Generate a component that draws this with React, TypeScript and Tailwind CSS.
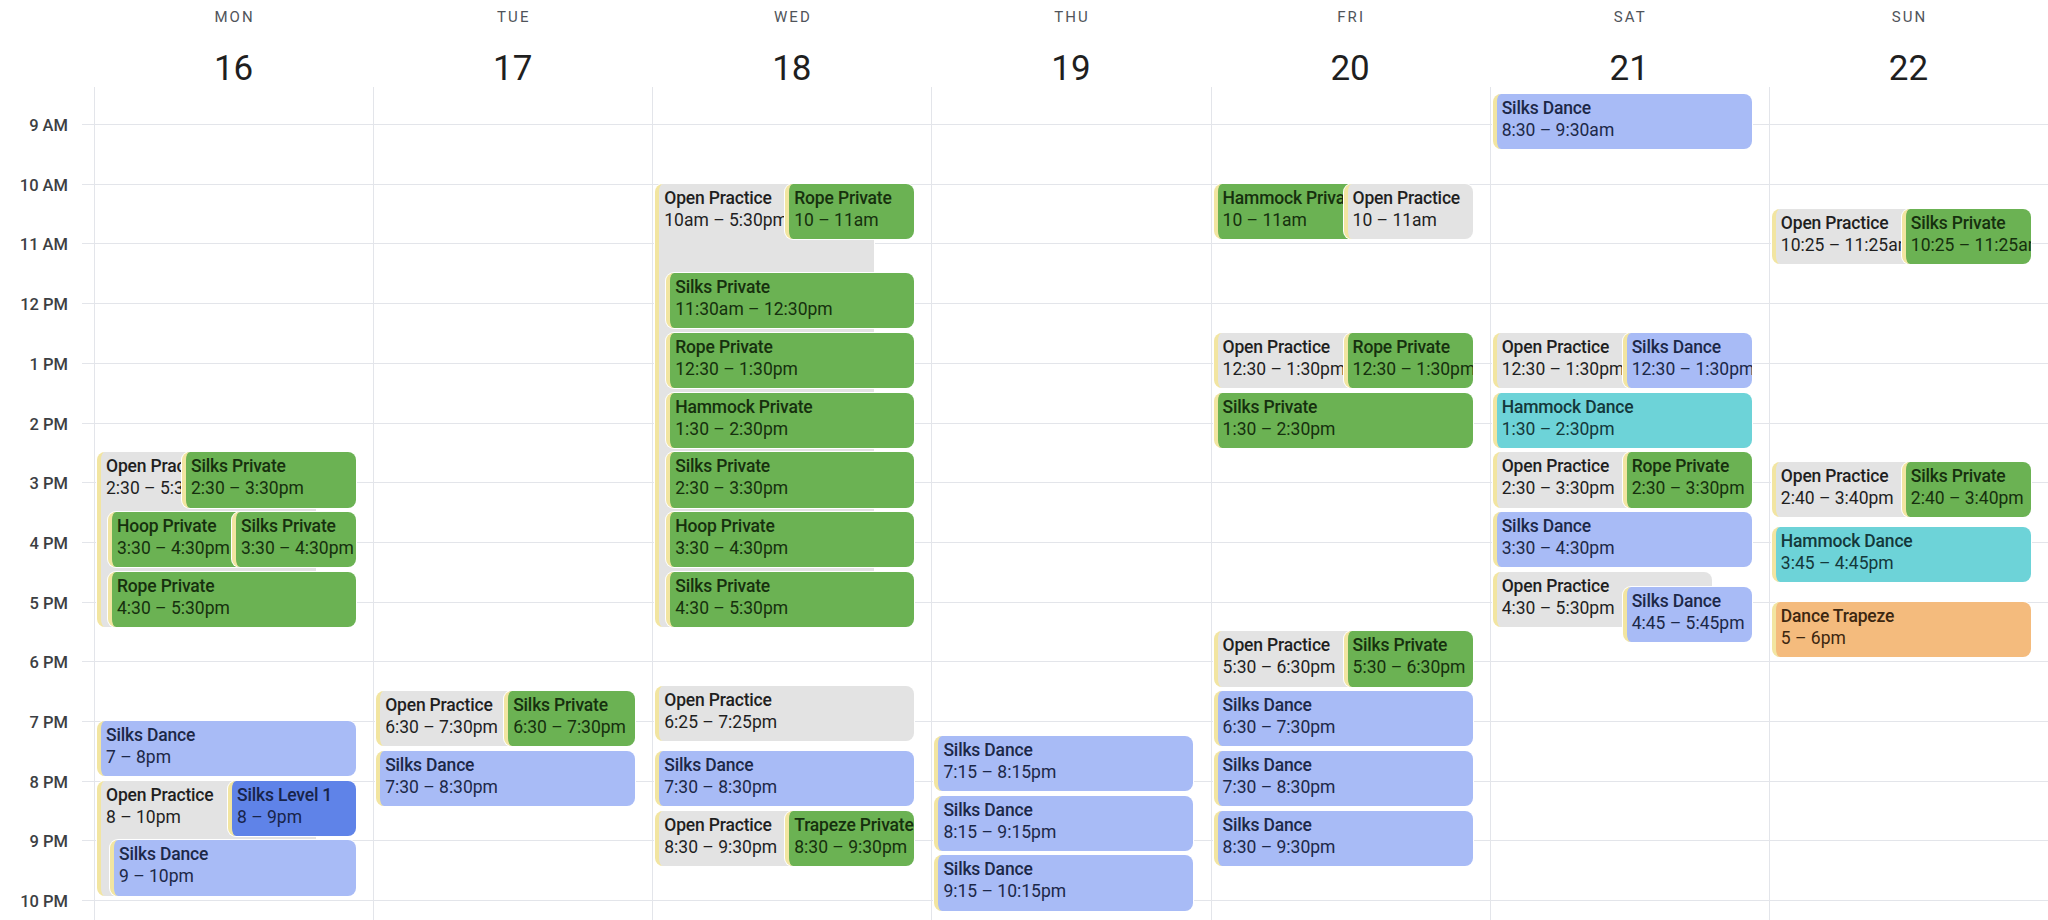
import React from 'react';

const HOUR = 59.7;
const OFFSET = 37; // 9 AM line, measured from top of the scroll body

type Tone = 'gray' | 'green' | 'blue' | 'navy' | 'cyan' | 'orange';

interface CalEvent {
  title: string;
  time: string;
  start: number;
  end: number;
  tone: Tone;
  l: number;
  r: number;
}

const toneClass: Record<Tone, string> = {
  gray: 'bg-[#e3e3e3] text-[#1f1f1f]',
  green: 'bg-[#6bb253] text-[#16300e]',
  blue: 'bg-[#a8bbf6] text-[#1c2848]',
  navy: 'bg-[#5f83e8] text-[#18244a]',
  cyan: 'bg-[#6dd3d8] text-[#14383b]',
  orange: 'bg-[#f4bb7d] text-[#3d2710]',
};

// horizontal slots inside a day column (px from the column's left edge)
const F = { l: 1, r: 262 };
const P1 = { l: 1, r: 222 };
const P2 = { l: 131, r: 262 };
const N = { l: 12, r: 262 };

const ev = (title: string, time: string, start: number, end: number, tone: Tone, slot: { l: number; r: number }): CalEvent => ({
  title,
  time,
  start,
  end,
  tone,
  ...slot,
});

const days: { name: string; date: number; events: CalEvent[] }[] = [
  {
    name: 'MON',
    date: 16,
    events: [
      ev('Open Practice', '2:30 – 5:30pm', 14.5, 17.5, 'gray', P1),
      ev('Silks Private', '2:30 – 3:30pm', 14.5, 15.5, 'green', { l: 86, r: 262 }),
      ev('Hoop Private', '3:30 – 4:30pm', 15.5, 16.5, 'green', { l: 12, r: 150 }),
      ev('Silks Private', '3:30 – 4:30pm', 15.5, 16.5, 'green', { l: 136, r: 262 }),
      ev('Rope Private', '4:30 – 5:30pm', 16.5, 17.5, 'green', N),
      ev('Silks Dance', '7 – 8pm', 19, 20, 'blue', F),
      ev('Open Practice', '8 – 10pm', 20, 22, 'gray', P1),
      ev('Silks Level 1', '8 – 9pm', 20, 21, 'navy', { l: 132, r: 262 }),
      ev('Silks Dance', '9 – 10pm', 21, 22, 'blue', { l: 14, r: 262 }),
    ],
  },
  {
    name: 'TUE',
    date: 17,
    events: [
      ev('Open Practice', '6:30 – 7:30pm', 18.5, 19.5, 'gray', P1),
      ev('Silks Private', '6:30 – 7:30pm', 18.5, 19.5, 'green', { l: 129, r: 262 }),
      ev('Silks Dance', '7:30 – 8:30pm', 19.5, 20.5, 'blue', F),
    ],
  },
  {
    name: 'WED',
    date: 18,
    events: [
      ev('Open Practice', '10am – 5:30pm', 10, 17.5, 'gray', P1),
      ev('Rope Private', '10 – 11am', 10, 11, 'green', P2),
      ev('Silks Private', '11:30am – 12:30pm', 11.5, 12.5, 'green', N),
      ev('Rope Private', '12:30 – 1:30pm', 12.5, 13.5, 'green', N),
      ev('Hammock Private', '1:30 – 2:30pm', 13.5, 14.5, 'green', N),
      ev('Silks Private', '2:30 – 3:30pm', 14.5, 15.5, 'green', N),
      ev('Hoop Private', '3:30 – 4:30pm', 15.5, 16.5, 'green', N),
      ev('Silks Private', '4:30 – 5:30pm', 16.5, 17.5, 'green', N),
      ev('Open Practice', '6:25 – 7:25pm', 18 + 25 / 60, 19 + 25 / 60, 'gray', F),
      ev('Silks Dance', '7:30 – 8:30pm', 19.5, 20.5, 'blue', F),
      ev('Open Practice', '8:30 – 9:30pm', 20.5, 21.5, 'gray', P1),
      ev('Trapeze Private', '8:30 – 9:30pm', 20.5, 21.5, 'green', P2),
    ],
  },
  {
    name: 'THU',
    date: 19,
    events: [
      ev('Silks Dance', '7:15 – 8:15pm', 19.25, 20.25, 'blue', F),
      ev('Silks Dance', '8:15 – 9:15pm', 20.25, 21.25, 'blue', F),
      ev('Silks Dance', '9:15 – 10:15pm', 21.25, 22.25, 'blue', F),
    ],
  },
  {
    name: 'FRI',
    date: 20,
    events: [
      ev('Hammock Private', '10 – 11am', 10, 11, 'green', P1),
      ev('Open Practice', '10 – 11am', 10, 11, 'gray', P2),
      ev('Open Practice', '12:30 – 1:30pm', 12.5, 13.5, 'gray', P1),
      ev('Rope Private', '12:30 – 1:30pm', 12.5, 13.5, 'green', P2),
      ev('Silks Private', '1:30 – 2:30pm', 13.5, 14.5, 'green', F),
      ev('Open Practice', '5:30 – 6:30pm', 17.5, 18.5, 'gray', P1),
      ev('Silks Private', '5:30 – 6:30pm', 17.5, 18.5, 'green', P2),
      ev('Silks Dance', '6:30 – 7:30pm', 18.5, 19.5, 'blue', F),
      ev('Silks Dance', '7:30 – 8:30pm', 19.5, 20.5, 'blue', F),
      ev('Silks Dance', '8:30 – 9:30pm', 20.5, 21.5, 'blue', F),
    ],
  },
  {
    name: 'SAT',
    date: 21,
    events: [
      ev('Silks Dance', '8:30 – 9:30am', 8.5, 9.5, 'blue', F),
      ev('Open Practice', '12:30 – 1:30pm', 12.5, 13.5, 'gray', P1),
      ev('Silks Dance', '12:30 – 1:30pm', 12.5, 13.5, 'blue', P2),
      ev('Hammock Dance', '1:30 – 2:30pm', 13.5, 14.5, 'cyan', F),
      ev('Open Practice', '2:30 – 3:30pm', 14.5, 15.5, 'gray', P1),
      ev('Rope Private', '2:30 – 3:30pm', 14.5, 15.5, 'green', P2),
      ev('Silks Dance', '3:30 – 4:30pm', 15.5, 16.5, 'blue', F),
      ev('Open Practice', '4:30 – 5:30pm', 16.5, 17.5, 'gray', P1),
      ev('Silks Dance', '4:45 – 5:45pm', 16.75, 17.75, 'blue', P2),
    ],
  },
  {
    name: 'SUN',
    date: 22,
    events: [
      ev('Open Practice', '10:25 – 11:25am', 10 + 25 / 60, 11 + 25 / 60, 'gray', P1),
      ev('Silks Private', '10:25 – 11:25am', 10 + 25 / 60, 11 + 25 / 60, 'green', P2),
      ev('Open Practice', '2:40 – 3:40pm', 14 + 40 / 60, 15 + 40 / 60, 'gray', P1),
      ev('Silks Private', '2:40 – 3:40pm', 14 + 40 / 60, 15 + 40 / 60, 'green', P2),
      ev('Hammock Dance', '3:45 – 4:45pm', 15.75, 16.75, 'cyan', F),
      ev('Dance Trapeze', '5 – 6pm', 17, 18, 'orange', F),
    ],
  },
];

const hours = ['9 AM', '10 AM', '11 AM', '12 PM', '1 PM', '2 PM', '3 PM', '4 PM', '5 PM', '6 PM', '7 PM', '8 PM', '9 PM', '10 PM'];

const y = (t: number) => OFFSET + (t - 9) * HOUR;

function EventCard({ e }: { e: CalEvent }) {
  return (
    <div
      className="absolute p-px bg-white rounded-[9px]"
      style={{ top: y(e.start) - 1, height: (e.end - e.start) * HOUR - 2.5, left: e.l, width: e.r - e.l }}
    >
      <div
        className={`h-full rounded-[8px] border-l-[4px] border-[#f2e5a1] overflow-hidden pl-[5px] pt-[3px] whitespace-nowrap leading-[22px] text-[17.5px] ${toneClass[e.tone]}`}
      >
        <div className="font-medium tracking-[-0.01em]">{e.title}</div>
        <div>{e.time}</div>
      </div>
    </div>
  );
}

export default function App() {
  return (
    <div className="w-[2048px] h-[920px] overflow-hidden bg-white font-['Roboto',sans-serif] text-[#1f1f1f]">
      {/* Day header */}
      <div className="flex h-[87px]">
        <div className="w-[94px] shrink-0" />
        <div className="flex-1 grid grid-cols-7">
          {days.map((d) => (
            <div key={d.name} className="flex flex-col items-center">
              <div className="mt-[7px] text-[15px] leading-[20px] tracking-[0.14em] pl-[0.14em] text-[#50545a]">
                {d.name}
              </div>
              <div className="mt-[20px] text-[35px] leading-[44px] text-[#1f1f1f]">{d.date}</div>
            </div>
          ))}
        </div>
      </div>

      {/* Scroll body */}
      <div className="relative flex h-[833px]">
        {hours.map((h, i) => (
          <div
            key={h}
            className="absolute left-[82px] right-0 h-px bg-[#e3e5ea]"
            style={{ top: OFFSET + i * HOUR }}
          />
        ))}

        <div className="relative w-[94px] shrink-0">
          {hours.map((h, i) => (
            <div
              key={h}
              className="absolute right-[26px] -translate-y-1/2 text-[16.5px] leading-[20px] font-medium text-[#3c4043] whitespace-nowrap"
              style={{ top: OFFSET + i * HOUR + 2 }}
            >
              {h}
            </div>
          ))}
        </div>

        <div className="flex-1 grid grid-cols-7">
          {days.map((d) => (
            <div key={d.name} className="relative border-l border-[#e3e5ea]">
              {d.events.map((e, i) => (
                <EventCard key={i} e={e} />
              ))}
            </div>
          ))}
        </div>
      </div>
    </div>
  );
}
